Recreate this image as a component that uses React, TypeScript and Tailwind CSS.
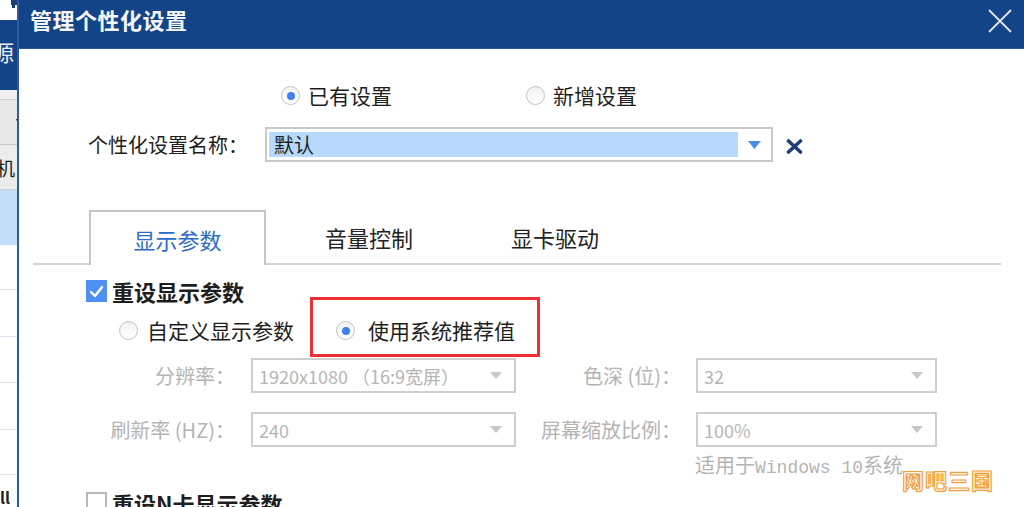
import { ReactNode } from "react"

function Radio({ checked }: { checked: boolean }) {
  return (
    <span className="flex h-[19px] w-[19px] shrink-0 items-center justify-center rounded-full border border-[#c2c2c2] bg-gradient-to-b from-[#f2f2f2] to-white">
      {checked && <span className="h-[8px] w-[8px] rounded-full bg-[#3b7ff0]" />}
    </span>
  )
}

function Checkbox({ checked }: { checked: boolean }) {
  if (!checked) {
    return <span className="h-[21px] w-[21px] shrink-0 border-2 border-[#b8b8b8] bg-white" />
  }
  return (
    <span className="flex h-[22px] w-[21px] shrink-0 items-center justify-center bg-[#4e8ff2]">
      <svg width="15" height="13" viewBox="0 0 15 13" fill="none">
        <path d="M2 7 L6 11 L13 2" stroke="white" strokeWidth="2.4" strokeLinecap="round" strokeLinejoin="round" />
      </svg>
    </span>
  )
}

function DisabledSelect({ value, width }: { value: string; width: string }) {
  return (
    <div className={`flex h-[35px] items-center justify-between border-2 border-[#cfcfcf] bg-white pl-[6px] pr-[12px] ${width}`}>
      <span className="whitespace-pre text-[18px] text-[#b6b6b6]">{value}</span>
      <svg width="12" height="7" viewBox="0 0 12 7">
        <path d="M0 0 H12 L6 7 Z" fill="#c8c8c8" />
      </svg>
    </div>
  )
}

function Label({ children, width }: { children: ReactNode; width: string }) {
  return <div className={`shrink-0 whitespace-pre text-right text-[20px] text-[#b4b4b4] ${width}`}>{children}</div>
}

function BackgroundStrip() {
  return (
    <div className="flex w-[17px] shrink-0 flex-col overflow-hidden bg-white">
      {/* top icon box */}
      <div className="relative h-[20px] bg-white">
        <span className="absolute right-0 top-0 h-[5px] w-[6px] bg-[#1d3f7c]" />
        <span className="absolute right-[2px] top-[4px] h-[4px] w-[3px] bg-[#1d3f7c]" />
      </div>
      <div className="flex h-[70px] items-center bg-[#134488]">
        <span className="-ml-[8px] pb-[8px] text-[22px] leading-none text-[#e8eef8]">源</span>
      </div>
      <div className="h-[10px] border-b border-[#cfcfcf] bg-[#f0f0f0]" />
      <div className="flex h-[45px] items-center justify-end border-b border-[#c8c8c8] bg-[#e8e8e8]">
        <span className="-mr-[6px] text-[20px] leading-none text-[#222]">t</span>
      </div>
      <div className="flex h-[45px] items-center border-b border-[#d0d0d0] bg-[#ececec]">
        <span className="-ml-[4px] text-[19px] leading-none text-[#222]">机</span>
      </div>
      <div className="h-[55px] bg-[#c3def8]" />
      <div className="h-[45px] border-b border-[#dde6f0]" />
      <div className="h-[47px] border-b border-[#dde6f0]" />
      <div className="h-[46px] border-b border-[#dde6f0]" />
      <div className="h-[47px] border-b border-[#dde6f0]" />
      <div className="h-[45px] border-b border-[#dde6f0]" />
      <div className="pt-[14px] text-[16px] font-bold leading-none text-[#222]">ll</div>
    </div>
  )
}

export default function App() {
  return (
    <div className="flex h-[507px] w-[1024px] overflow-hidden bg-white font-['Noto_Sans_CJK_SC','Liberation_Sans',sans-serif] leading-none text-[#1e1e1e]">
      <BackgroundStrip />

      {/* Dialog */}
      <div className="relative flex flex-1 flex-col border-l-2 border-[#2d5aa5]">
        {/* Title bar */}
        <div className="flex h-[49px] shrink-0 items-start justify-between border-b border-[#2a58a0] bg-[#134488] pl-[11px] pr-[11px] pt-[8px]">
          <span className="text-[22px] font-bold tracking-[0.5px] text-[#f4f6fa]">管理个性化设置</span>
          <svg width="26" height="26" viewBox="0 0 26 26">
            <path d="M2 2 L24 24 M24 2 L2 24" stroke="#dfe4ee" strokeWidth="1.8" />
          </svg>
        </div>

        {/* Mode radios */}
        <div className="mt-[36px] flex h-[26px] items-center pl-[262px]">
          <Radio checked />
          <span className="ml-[8px] text-[21px]">已有设置</span>
          <span className="ml-[134px]"><Radio checked={false} /></span>
          <span className="ml-[8px] text-[21px]">新增设置</span>
        </div>

        {/* Name combo */}
        <div className="mt-[21px] flex items-center pl-[69px]">
          <span className="w-[177px] shrink-0 text-[20px]">个性化设置名称：</span>
          <div className="flex h-[35px] w-[508px] items-center border-2 border-[#c9c9c9] bg-white pl-[2px] pr-[10px]">
            <div className="flex h-[25px] w-[474px] items-center bg-[#b6d9fc] pl-[5px] text-[20px]">默认</div>
            <svg width="13" height="8" viewBox="0 0 13 8" className="ml-[10px]">
              <path d="M0 0 H13 L6.5 8 Z" fill="#4a8ee8" />
            </svg>
          </div>
          <svg width="17" height="15" viewBox="0 0 17 15" className="ml-[13px] mt-[3px]">
            <path d="M2.5 2 L14.5 13 M14.5 2 L2.5 13" stroke="#1f3e78" strokeWidth="3.6" strokeLinecap="round" />
          </svg>
        </div>

        {/* Tabs */}
        <div className="ml-[14px] mt-[50px] flex h-[53px] w-[968px] items-end border-b-2 border-[#d4d4d4]">
          <div className="-mb-[2px] ml-[56px] flex h-[55px] w-[177px] items-center justify-center border-2 border-b-0 border-[#c6c6c6] bg-white">
            <span className="text-[22px] text-[#2d6cc6]">显示参数</span>
          </div>
          <div className="flex h-[53px] w-[206px] items-center justify-center">
            <span className="text-[22px] text-[#222]">音量控制</span>
          </div>
          <div className="flex h-[53px] w-[166px] items-center justify-center">
            <span className="text-[22px] text-[#222]">显卡驱动</span>
          </div>
        </div>

        {/* Reset display params */}
        <div className="mt-[15px] flex h-[22px] items-center pl-[67px]">
          <Checkbox checked />
          <span className="ml-[5px] text-[22px] font-bold">重设显示参数</span>
        </div>

        <div className="mt-[18px] flex h-[26px] items-center pl-[100px]">
          <Radio checked={false} />
          <span className="ml-[9px] text-[21px]">自定义显示参数</span>
          <div className="relative ml-[42px] flex items-center">
            <Radio checked />
            <span className="ml-[13px] text-[21px]">使用系统推荐值</span>
            {/* annotation frame */}
            <span className="absolute -bottom-[16px] -left-[26px] -right-[25px] -top-[23px] border-[3px] border-[#ee3035]" />
          </div>
        </div>

        {/* Resolution / depth */}
        <div className="mt-[17px] flex items-center">
          <Label width="w-[216px]">分辨率：</Label>
          <div className="ml-[16px]">
            <DisabledSelect value="1920x1080 （16:9宽屏）" width="w-[265px]" />
          </div>
          <Label width="w-[165px]">色深 (位)：</Label>
          <div className="ml-[15px]">
            <DisabledSelect value="32" width="w-[241px]" />
          </div>
        </div>

        {/* Refresh / scale */}
        <div className="mt-[19px] flex items-center">
          <Label width="w-[216px]">刷新率 (HZ)：</Label>
          <div className="ml-[16px]">
            <DisabledSelect value="240" width="w-[265px]" />
          </div>
          <Label width="w-[165px]">屏幕缩放比例：</Label>
          <div className="ml-[15px]">
            <DisabledSelect value="100%" width="w-[241px]" />
          </div>
        </div>

        <div className="mt-[8px] pl-[676px] text-[20px] text-[#b4b4b4]">
          适用于<span className="font-['Liberation_Mono',monospace] text-[18px]">Windows 10</span>系统
        </div>

        {/* Reset N-card params */}
        <div className="mt-[15px] flex h-[22px] items-start pl-[67px]">
          <Checkbox checked={false} />
          <span className="ml-[5px] text-[22px] font-bold">重设N卡显示参数</span>
        </div>

        {/* watermark */}
        <span className="absolute bottom-[17px] right-[30px] text-[22px] font-bold tracking-[1px] text-[#fff8ec] [-webkit-text-stroke:1.2px_#f2a03c]">
          网吧三国
        </span>
      </div>
    </div>
  )
}
